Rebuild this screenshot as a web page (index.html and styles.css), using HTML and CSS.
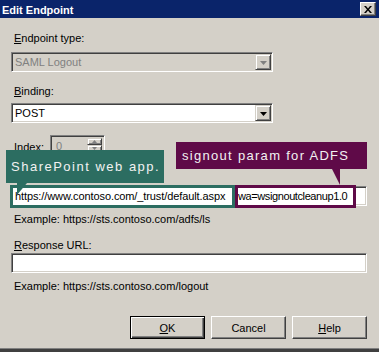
FILE: index.html
```html
<!DOCTYPE html>
<html lang="en">
<head>
  <meta charset="UTF-8">
  <title>Edit Endpoint</title>
  <link rel="stylesheet" href="styles.css">
</head>
<body>
  <div class="dialog">
    <div class="titlebar">
      <span class="title">Edit Endpoint</span>
      <span class="close">
        <svg width="8" height="7" viewBox="0 0 8 7"><path d="M0 0h2l2 2.5L6 0h2L5 3.5 8 7H6L4 4.5 2 7H0l3-3.5z" fill="#000"/></svg>
      </span>
    </div>

    <div class="content">
      <label class="lbl"><u>E</u>ndpoint type:</label>
      <div class="combo disabled first">
        <span class="value">SAML Logout</span>
        <span class="drop"><svg width="7" height="4" viewBox="0 0 7 4"><path d="M0 0h7L3.5 4z"/></svg></span>
      </div>

      <label class="lbl binding"><u>B</u>inding:</label>
      <div class="combo second">
        <span class="value">POST</span>
        <span class="drop"><svg width="7" height="4" viewBox="0 0 7 4"><path d="M0 0h7L3.5 4z"/></svg></span>
      </div>

      <div class="index-row">
        <label class="lbl"><u>I</u>ndex:</label>
        <div class="spin">
          <span class="spin-value">0</span>
          <span class="spin-btns">
            <span class="spin-btn"><svg width="5" height="3" viewBox="0 0 5 3"><path d="M2.5 0L5 3H0z"/></svg></span>
            <span class="spin-btn"><svg width="5" height="3" viewBox="0 0 5 3"><path d="M0 0h5L2.5 3z"/></svg></span>
          </span>
        </div>
      </div>

      <div class="field url">
        <span class="mark mark-green">https://www.contoso.com/_trust/default.aspx</span><span class="mark mark-purple">wa=wsignoutcleanup1.0</span>
      </div>
      <p class="hint">Example: https://sts.contoso.com/adfs/ls</p>

      <label class="lbl response"><u>R</u>esponse URL:</label>
      <div class="field response-field"></div>
      <p class="hint">Example: https://sts.contoso.com/logout</p>

      <div class="buttons">
        <button class="btn default"><u>O</u>K</button>
        <button class="btn">Cancel</button>
        <button class="btn"><u>H</u>elp</button>
      </div>
    </div>

    <!-- annotation callouts -->
    <div class="callout callout-green">SharePoint web app.</div>
    <div class="callout callout-purple">signout param for ADFS</div>
  </div>
</body>
</html>
```

FILE: styles.css
```css
body {
  margin: 0;
  padding: 0;
  background: #d4d0c8;
}
.dialog {
  position: relative;
  width: 379px;
  height: 352px;
  box-sizing: border-box;
  overflow: hidden;
  background: #d4d0c8;
  font-family: "Liberation Sans", Arial, sans-serif;
  font-size: 11px;
  color: #000;
  border-bottom: 3px solid #404040;
  box-shadow: inset 0 -1px #808080;
}
.titlebar {
  height: 18px;
  background: #0a246a;
  display: flex;
  align-items: center;
  justify-content: space-between;
  padding: 0 3px 0 2px;
}
.title {
  color: #fff;
  font-weight: bold;
  font-size: 11px;
  line-height: 18px;
  padding-top: 1px;
}
.close {
  width: 16px;
  height: 14px;
  box-sizing: border-box;
  display: flex;
  align-items: center;
  justify-content: center;
  background: #d4d0c8;
  border: 1px solid;
  border-color: #fff #404040 #404040 #fff;
  box-shadow: inset -1px -1px #808080;
}
.content {
  padding: 14px 12px 0 11px;
}
.lbl {
  display: block;
  height: 13px;
  line-height: 13px;
  margin-left: 3px;
}
.combo,
.field,
.spin {
  box-sizing: border-box;
  border: 1px solid;
  border-color: #808080 #fff #fff #808080;
  box-shadow: inset 1px 1px #404040, inset -1px -1px #d4d0c8;
  background: #fff;
}
.combo {
  width: 262px;
  height: 20px;
  padding: 1px;
  display: flex;
  align-items: center;
}
.combo.first {
  margin-top: 7px;
}
.binding {
  margin-top: 13px;
}
.combo.second {
  margin-top: 5px;
}
.combo .value {
  flex: 1;
  padding-left: 2px;
  line-height: 16px;
}
.combo.disabled {
  background: #d4d0c8;
  color: #808080;
}
.drop {
  width: 16px;
  height: 16px;
  box-sizing: border-box;
  display: flex;
  align-items: center;
  justify-content: center;
  background: #d4d0c8;
  border: 1px solid;
  border-color: #d4d0c8 #404040 #404040 #d4d0c8;
  box-shadow: inset 1px 1px #fff, inset -1px -1px #808080;
}
.drop svg {
  fill: #000;
  margin-top: 1px;
}
.disabled .drop svg {
  fill: #808080;
}
.index-row {
  margin-top: 12px;
  display: flex;
  align-items: flex-start;
  gap: 6px;
}
.index-row .lbl {
  margin-top: 6px;
}
.spin {
  width: 55px;
  height: 20px;
  padding: 2px;
  display: flex;
  background: #d4d0c8;
  box-shadow: inset 1px 1px #404040, inset -1px -1px #d4d0c8;
}
.spin-value {
  flex: 1;
  color: #808080;
  padding-left: 3px;
  line-height: 16px;
}
.spin-btns {
  display: flex;
  flex-direction: column;
  width: 15px;
}
.spin-btn {
  height: 8px;
  box-sizing: border-box;
  display: flex;
  align-items: center;
  justify-content: center;
  border: 1px solid;
  border-color: #d4d0c8 #404040 #404040 #d4d0c8;
  box-shadow: inset 1px 1px #fff, inset -1px -1px #808080;
}
.spin-btn svg {
  fill: #808080;
}
.field {
  width: 356px;
  height: 20px;
  padding: 2px;
}
.url {
  margin-top: 31px;
  display: flex;
  align-items: center;
}
.mark {
  height: 23px;
  box-sizing: border-box;
  border: 3px solid;
  background: #fff;
  line-height: 17px;
  white-space: nowrap;
  overflow: hidden;
  flex-shrink: 0;
}
.mark-green {
  width: 225px;
  margin-left: -4px;
  padding-left: 2px;
  letter-spacing: -0.1px;
  border-color: #2c6d61;
}
.mark-purple {
  width: 121px;
  padding-left: 0;
  letter-spacing: -0.4px;
  border-color: #5f0a48;
}
.hint {
  margin: 7px 0 0 3px;
  line-height: 13px;
}
.response {
  margin-top: 13px;
}
.response-field {
  margin-top: 1px;
}
.buttons {
  margin-top: 23px;
  display: flex;
  justify-content: flex-end;
  gap: 6px;
}
.btn {
  width: 75px;
  height: 23px;
  box-sizing: border-box;
  background: #d4d0c8;
  font-family: "Liberation Sans", Arial, sans-serif;
  font-size: 11px;
  color: #000;
  padding: 0;
  border: 1px solid;
  border-color: #fff #404040 #404040 #fff;
  box-shadow: inset -1px -1px #808080;
}
.btn.default {
  border-color: #000;
  box-shadow: inset 1px 1px #fff, inset -1px -1px #404040, inset -2px -2px #808080;
}
.callout {
  position: absolute;
  box-sizing: border-box;
  color: #f2f2f2;
  font-family: "Liberation Sans", Arial, sans-serif;
  font-size: 13px;
  white-space: nowrap;
}
.callout::after {
  content: "";
  position: absolute;
  top: 100%;
  width: 0;
  height: 0;
}
.callout-green {
  left: 6px;
  top: 150px;
  width: 158px;
  height: 33px;
  padding: 8px 0 0 5px;
  line-height: 17px;
  letter-spacing: 1.5px;
  background: #2c6d61;
}
.callout-green::after {
  left: 11px;
  border-top: 12px solid #2c6d61;
  border-right: 10px solid transparent;
}
.callout-purple {
  left: 176px;
  top: 142px;
  width: 191px;
  height: 27px;
  padding: 5px 0 0 6px;
  line-height: 17px;
  letter-spacing: 1.3px;
  background: #5f0a48;
}
.callout-purple::after {
  left: 156px;
  border-top: 16px solid #5f0a48;
  border-left: 8px solid transparent;
}
```
